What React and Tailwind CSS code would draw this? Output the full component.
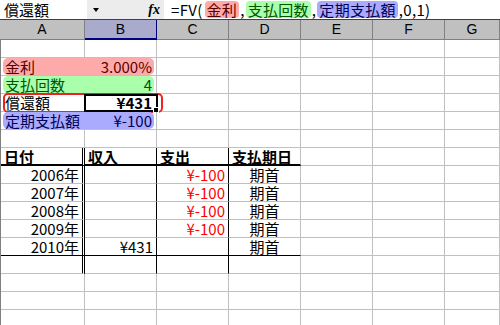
import React from "react";

const GRID = "grid grid-cols-[84px_72px_72px_72px_72px_72px_1fr]";
const CELL =
  "h-[18px] border-r border-b border-[#c0c0c0] flex items-center px-[3px] whitespace-nowrap";

function Cell({ className = "", children }) {
  return <div className={`${CELL} ${className}`}>{children}</div>;
}

function Blanks({ n }) {
  return Array.from({ length: n }).map((_, i) => <Cell key={i} />);
}

function EmptyRow() {
  return (
    <div className={GRID}>
      <Blanks n={7} />
    </div>
  );
}

// A:B colored range (range-finder style highlight)
function RangeRow({ label, value, tone, children }) {
  return (
    <div className={`${GRID} relative`}>
      <div className="col-span-2 h-[18px] border-r border-b border-[#c0c0c0] px-[2px]">
        <div className={`h-full rounded-[5px] flex items-center justify-between px-[2px] ${tone}`}>
          <span>{label}</span>
          <span>{value}</span>
        </div>
      </div>
      <Blanks n={5} />
      {children}
    </div>
  );
}

const DBL = "border-r-[3px] border-r-black [border-right-style:double]";

function TableRow({ year, income, expense, timing, last }) {
  const bottom = last ? "border-b-black" : "";
  return (
    <div className={GRID}>
      <Cell className={`justify-end ${DBL} ${bottom}`}>{year}</Cell>
      <Cell className={`justify-end border-r-black ${bottom}`}>{income}</Cell>
      <Cell className={`justify-end text-[#ff0000] border-r-black ${bottom}`}>{expense}</Cell>
      <Cell className={`justify-center ${bottom}`}>{timing}</Cell>
      <Blanks n={3} />
    </div>
  );
}

const years = [
  { year: "2006年", income: "", expense: "¥-100", timing: "期首" },
  { year: "2007年", income: "", expense: "¥-100", timing: "期首" },
  { year: "2008年", income: "", expense: "¥-100", timing: "期首" },
  { year: "2009年", income: "", expense: "¥-100", timing: "期首" },
  { year: "2010年", income: "¥431", expense: "", timing: "期首", last: true },
];

export default function App() {
  return (
    <div className="w-[500px] h-[325px] overflow-hidden bg-white text-black text-[15px] leading-[17px] font-['Noto_Sans_CJK_JP',sans-serif]">
      {/* formula bar */}
      <div className="flex h-[20px] border-b border-[#404040]">
        <div className="w-[87px] bg-white flex items-center pl-[4px]">償還額</div>
        <div className="w-[77px] bg-[#ececec] flex items-center">
          <span className="ml-[6px] w-0 h-0 border-x-[3px] border-x-transparent border-t-[4px] border-t-black" />
          <span className="ml-auto mr-[4px] italic font-bold text-[14px] font-['Liberation_Serif',serif]">fx</span>
        </div>
        <div className="flex-1 bg-white flex items-center pl-[7px] whitespace-nowrap tracking-[0.3px]">
          <span className="mr-[2px]">=FV(</span>
          <span className="bg-[#ffaaaa] text-[#550000] rounded-[4px] px-[2px]">金利</span>
          <span className="px-[1px]">,</span>
          <span className="bg-[#aaffaa] text-[#005500] rounded-[4px] px-[2px]">支払回数</span>
          <span className="px-[1px]">,</span>
          <span className="bg-[#aaaaff] text-[#000055] rounded-[4px] px-[2px]">定期支払額</span>
          <span className="pl-[1px]">,0,1)</span>
        </div>
      </div>

      {/* column headers */}
      <div className="grid grid-cols-[85px_72px_72px_72px_72px_72px_1fr] h-[20px] bg-[#c0c0c0] text-[14px] font-['Liberation_Sans',sans-serif]">
        {["A", "B", "C", "D", "E", "F", "G"].map((c) => (
          <div
            key={c}
            className={
              c === "B"
                ? "flex items-center justify-center bg-[#aaaacc] border-r border-b-2 border-[#000080]"
                : "flex items-center justify-center border-r border-b border-[#808080]"
            }
          >
            {c}
          </div>
        ))}
      </div>

      {/* sheet body */}
      <div className="border-l border-[#808080]">
        <EmptyRow />
        <RangeRow label="金利" value="3.000%" tone="bg-[#ffaaaa] text-[#550000]" />
        <RangeRow label="支払回数" value="4" tone="bg-[#aaffaa] text-[#005500]" />
        <RangeRow label="償還額" value={<b className="font-bold">¥431</b>} tone="text-black">
          <div className="absolute left-[2px] top-[-1px] w-[160px] h-[20px] border-2 border-[#ee2222] rounded-[5px]" />
          <div className="absolute left-[83px] top-0 w-[74px] h-[18px] border-2 border-black">
            <div className="absolute right-[-3px] bottom-[-3px] w-[6px] h-[6px] bg-black border border-white" />
          </div>
        </RangeRow>
        <RangeRow label="定期支払額" value="¥-100" tone="bg-[#aaaaff] text-[#000055]" />
        <EmptyRow />

        <div className={`${GRID} font-bold`}>
          <Cell className={`border-b-2 border-b-black ${DBL}`}>日付</Cell>
          <Cell className="border-b-2 border-b-black border-r-black">収入</Cell>
          <Cell className="border-b-2 border-b-black border-r-black">支出</Cell>
          <Cell className="border-b-2 border-b-black">支払期日</Cell>
          <Blanks n={3} />
        </div>
        {years.map((r) => (
          <TableRow key={r.year} {...r} />
        ))}
        <div className={GRID}>
          <Cell className={DBL} />
          <Cell className="border-r-black" />
          <Cell className="border-r-black" />
          <Blanks n={4} />
        </div>
        <EmptyRow />
        <EmptyRow />
        <EmptyRow />
      </div>
    </div>
  );
}
